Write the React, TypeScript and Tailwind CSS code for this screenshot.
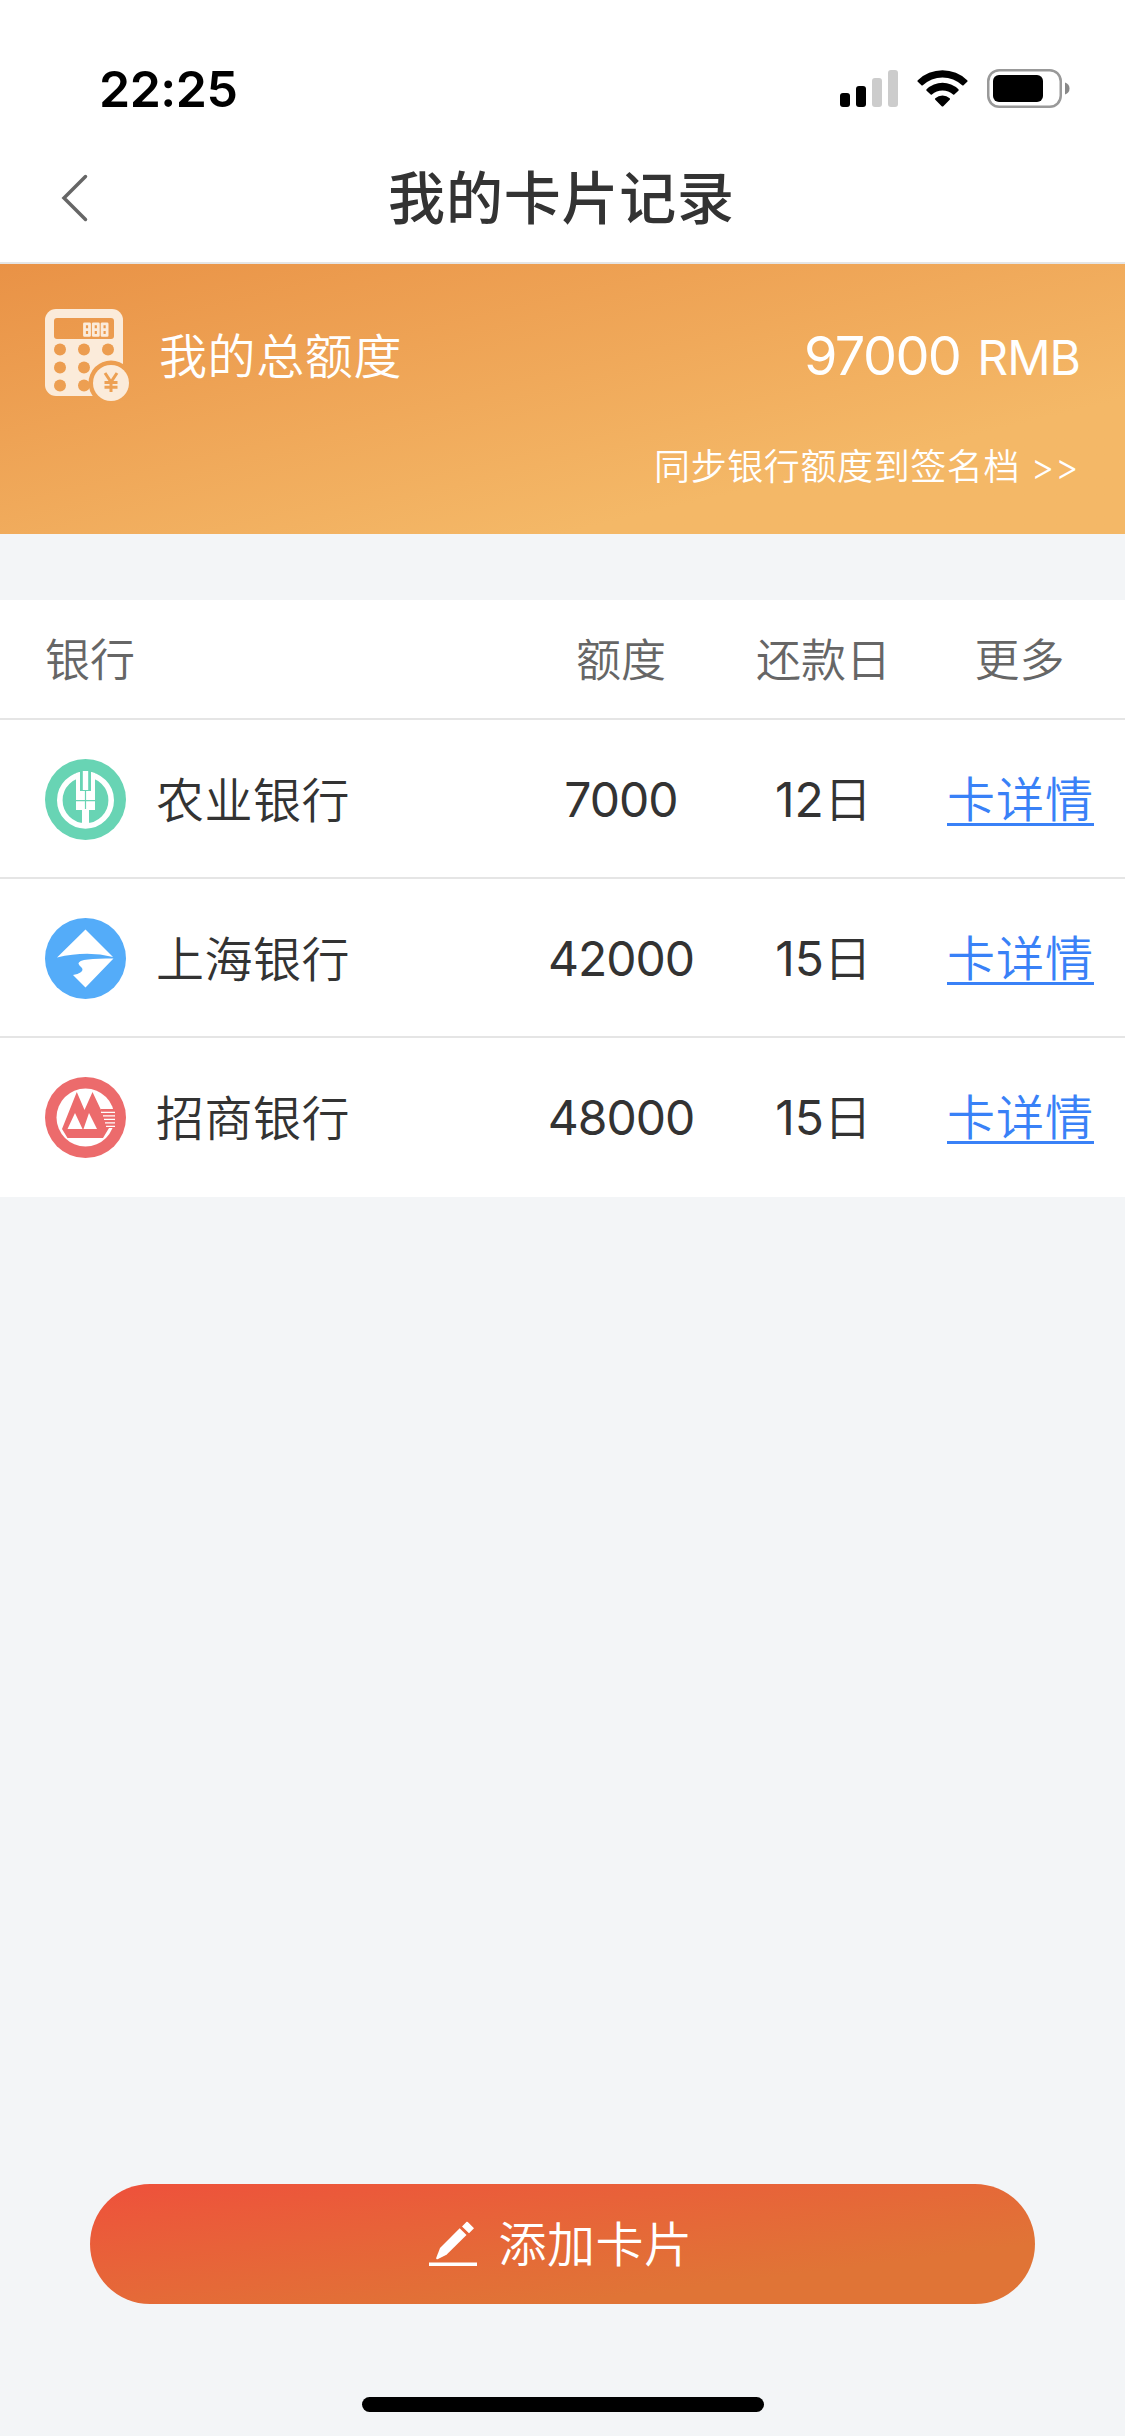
import type { ReactNode } from "react";

interface BankCard {
  id: string;
  name: string;
  limit: string;
  repayDay: number;
  icon: ReactNode;
}

function SignalIcon() {
  return (
    <svg className="h-[38px] w-[58px]" viewBox="0 0 58 38">
      <rect x="0" y="24" width="10" height="14" rx="3" fill="#000" />
      <rect x="16" y="17" width="10" height="21" rx="3" fill="#000" />
      <rect x="32" y="9" width="10" height="29" rx="3" fill="#ccc" />
      <rect x="48" y="1" width="10" height="37" rx="3" fill="#ccc" />
    </svg>
  );
}

function WifiIcon() {
  return (
    <svg className="ml-[19px] h-[38px] w-[51px]" viewBox="0 0 51 38">
      <path d="M0.8 11.2A35.5 35.5 0 0 1 50.2 11.2Q51 12 50.2 12.8L46.3 16.4Q45.8 16.8 45.2 16.3A28.5 28.5 0 0 0 5.8 16.3Q5.2 16.8 4.7 16.4L0.8 12.8Q0 12 0.8 11.2Z" />
      <path d="M9.6 20.2A23 23 0 0 1 41.4 20.2Q42.2 21 41.4 21.8L37.3 25.5Q36.7 26 36.1 25.5A15.7 15.7 0 0 0 14.9 25.5Q14.3 26 13.7 25.5L9.6 21.8Q8.8 21 9.6 20.2Z" />
      <path d="M18.3 29.3A10.8 10.8 0 0 1 32.7 29.3Q33.5 30 32.7 30.8L26.3 37.2Q25.5 38 24.7 37.2L18.3 30.8Q17.5 30 18.3 29.3Z" />
    </svg>
  );
}

function BatteryIcon() {
  return (
    <svg className="ml-[19px] h-[39px] w-[83px]" viewBox="0 0 83 39">
      <rect x="1.25" y="1.25" width="72.5" height="36.5" rx="11" fill="none" stroke="#999" strokeWidth="2.5" />
      <rect x="6" y="6" width="50" height="27" rx="6" fill="#000" />
      <path d="M78 13.5q4.5 1.5 4.5 6t-4.5 6z" fill="#888" />
    </svg>
  );
}

function CalculatorIcon() {
  return (
    <svg className="h-[93px] w-[86px]" viewBox="0 0 86 93">
      <defs>
        <mask id="calc">
          <rect width="86" height="93" fill="#fff" />
          <rect x="9" y="9" width="60" height="21" rx="3" fill="#000" />
          <g fill="#000">
            <circle cx="15" cy="40.5" r="6" />
            <circle cx="39" cy="40.5" r="6" />
            <circle cx="63" cy="40.5" r="6" />
            <circle cx="15" cy="58.5" r="6" />
            <circle cx="39" cy="58.5" r="6" />
            <circle cx="15" cy="76.5" r="6" />
            <circle cx="39" cy="76.5" r="6" />
            <circle cx="66" cy="74" r="22.5" />
          </g>
        </mask>
      </defs>
      <rect width="78" height="87" rx="11" fill="#fbebda" mask="url(#calc)" />
      <g fill="none" stroke="#fbebda" strokeWidth="2.8" strokeLinejoin="round">
        <path d="M39.5 14.8h5v11.6h-5zM39.5 20.6h5" />
        <path d="M48.3 14.8h5v11.6h-5zM48.3 20.6h5" />
        <path d="M57.1 14.8h5v11.6h-5zM57.1 20.6h5" />
      </g>
      <circle cx="66" cy="74" r="18" fill="#fbebda" />
      <path d="M60 64l6 9 6-9M66 73v10M59.5 73.5h13M59.5 78.2h13" fill="none" stroke="#eda053" strokeWidth="3" />
    </svg>
  );
}

function AbcIcon() {
  return (
    <svg className="size-[81px]" viewBox="0 0 81 81">
      <circle cx="40.5" cy="40.5" r="40.5" fill="#68d4b4" />
      <circle cx="40.5" cy="41.2" r="25.7" fill="none" stroke="#fff" strokeWidth="5.6" />
      <path d="M35 10h11v12H35z" fill="#68d4b4" />
      <path d="M31 14l4-1v19h11V13l4 1v37h-6v17h-7V51h-6z" fill="#fff" />
      <path d="M37.8 12h5.4v19h-5.4z" fill="#fff" />
      <path d="M40.5 32v18M31 41.7h19" stroke="#68d4b4" strokeWidth="1.2" />
    </svg>
  );
}

function BoshIcon() {
  return (
    <svg className="size-[81px]" viewBox="0 0 81 81">
      <circle cx="40.5" cy="40.5" r="40.5" fill="#54acf9" />
      <path d="M40.5 11.5L68 39Q42 32.5 12 39.5Z" fill="#fff" />
      <path d="M68.5 40.5L40.5 69.5L28 57Q38 55 37.5 51Q37 49.5 34.5 47.5Q31 44 39 42Q48 40 68.5 40.5Z" fill="#fff" />
    </svg>
  );
}

function CmbIcon() {
  return (
    <svg className="size-[81px]" viewBox="0 0 81 81">
      <circle cx="40.5" cy="40.5" r="40.5" fill="#ec6b6c" />
      <circle cx="40.5" cy="40.5" r="29" fill="#fff" />
      <path d="M31.8 15L39.5 33L47.5 15L56 33L64 51L58 61H22.5L17 52Z" fill="#ec6b6c" />
      <path d="M30 36L37.5 52H22.5ZM44 36L52 52H38.5Z" fill="#fff" />
      <path d="M55.5 32h13.5l1 9-1.5 10H62z" fill="#ec6b6c" />
      <path d="M56 35.3h14M58 38.8h12M59 42.3h11M60 45.8h10M61 49.3h9" stroke="#fff" strokeWidth="1.2" />
    </svg>
  );
}

function PencilIcon() {
  return (
    <svg className="h-[46px] w-[48px]" viewBox="0 0 48 46" fill="#fff">
      <path d="M30.7 7.3L37.5 14L17.5 33.8L8.5 38.2Q7 38.6 7.2 37L11 27Z" />
      <path d="M33 5.5L37.600 0.800Q38.200 0.400 38.800 1L45 7.200L40 12.300Z" />
      <rect y="41.5" width="48" height="3.5" />
    </svg>
  );
}

const cards: BankCard[] = [
  { id: "abc", name: "农业银行", limit: "7000", repayDay: 12, icon: <AbcIcon /> },
  { id: "bosh", name: "上海银行", limit: "42000", repayDay: 15, icon: <BoshIcon /> },
  { id: "cmb", name: "招商银行", limit: "48000", repayDay: 15, icon: <CmbIcon /> },
];

function StatusBar() {
  return (
    <div className="flex h-[132px] items-start justify-between pl-[99px] pr-[55px] pt-[69px]">
      <span className="text-[50px] leading-[40px] font-semibold tracking-[-0.5px] text-black">
        22:25
      </span>
      <div className="flex items-start">
        <SignalIcon />
        <WifiIcon />
        <BatteryIcon />
      </div>
    </div>
  );
}

function NavBar() {
  return (
    <header className="grid h-[132px] grid-cols-[120px_1fr_120px] items-center border-b-2 border-[#e5e5e5] pt-[2px]">
      <button className="pl-[60px]" aria-label="返回">
        <svg className="h-[48px] w-[29px]" viewBox="0 0 29 48">
          <path d="M25.5 2.5L4 24L25.5 45.5" fill="none" stroke="#666" strokeWidth="3.5" strokeLinecap="round" />
        </svg>
      </button>
      <h1 className="pr-[2px] text-center text-[57px] leading-none font-medium tracking-[0.8px] text-[#333]">
        我的卡片记录
      </h1>
    </header>
  );
}

function TotalPanel() {
  return (
    <section className="h-[270px] bg-linear-to-br from-[#e99246] to-[#f4b867] to-75% px-[45px] pt-[45px] text-white">
      <div className="flex h-[93px] items-center">
        <CalculatorIcon />
        <span className="ml-[28px] pt-[2px] text-[48px] font-[350] tracking-[0.6px]">
          我的总额度
        </span>
        <div className="ml-auto flex items-baseline">
          <span className="text-[54px] tracking-[-1.6px]">97000</span>
          <span className="ml-[17px] text-[48px] tracking-[-1px]">RMB</span>
        </div>
      </div>
      <p className="mt-[38px] pr-[1px] text-right text-[36px] font-[350] tracking-[0.6px]">
        同步银行额度到签名档 &gt;&gt;
      </p>
    </section>
  );
}

function CardTable() {
  return (
    <section className="mt-[66px] bg-white font-[350]">
      <div className="grid h-[120px] grid-cols-[521px_200px_205px_1fr] items-center border-b-2 border-[#e5e5e5] pt-[4px] text-center text-[45px] text-[#666]">
        <span className="pl-[45px] text-left">银行</span>
        <span>额度</span>
        <span>还款日</span>
        <span className="pr-[12px]">更多</span>
      </div>
      {cards.map((card) => (
        <div
          key={card.id}
          className="grid h-[159px] grid-cols-[521px_200px_205px_1fr] items-center border-b-2 border-[#e5e5e5] pt-[2px] text-center text-[48px] text-[#333] last:border-white"
        >
          <div className="flex items-center pl-[45px]">
            {card.icon}
            <span className="ml-[30px] pt-[2px] tracking-[0.5px]">{card.name}</span>
          </div>
          <span className="font-normal tracking-[-1px]">{card.limit}</span>
          <span>
            <span className="font-normal">{card.repayDay}</span>日
          </span>
          <a className="flex justify-center pr-[10px] pb-[9px] text-[#3981f7]">
            <span className="h-[62px] border-b-3 border-[#3981f7] leading-[72px] tracking-[1px]">
              卡详情
            </span>
          </a>
        </div>
      ))}
    </section>
  );
}

export default function App() {
  return (
    <div className="flex h-[2436px] w-[1125px] flex-col bg-[#f3f5f7] font-['Inter','Noto_Sans_CJK_SC',sans-serif]">
      <div className="bg-white">
        <StatusBar />
        <NavBar />
      </div>
      <TotalPanel />
      <CardTable />
      <button className="mx-[90px] mt-auto flex h-[120px] items-center justify-center gap-[21px] rounded-full bg-linear-to-br from-[#ee503b] to-[#e07436] to-75% pr-[3px] text-[48px] text-white">
        <PencilIcon />
        <span className="pt-[2px] font-[350] tracking-[0.5px]">添加卡片</span>
      </button>
      <div className="mx-auto mt-[93px] mb-[24px] h-[15px] w-[402px] rounded-full bg-black" />
    </div>
  );
}
